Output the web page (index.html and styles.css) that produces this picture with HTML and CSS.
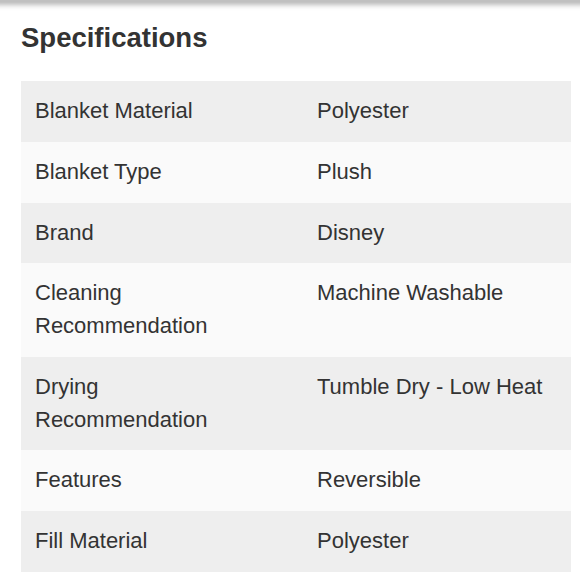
FILE: index.html
```html
<!DOCTYPE html>
<html>
<head>
<meta charset="utf-8">
<link rel="stylesheet" href="styles.css">
</head>
<body>
<div class="topbar"></div>
<section class="specs">
  <h2 class="title">Specifications</h2>
  <div class="table">
    <div class="row"><div class="cell">Blanket Material</div><div class="cell">Polyester</div></div>
    <div class="row"><div class="cell">Blanket Type</div><div class="cell">Plush</div></div>
    <div class="row"><div class="cell">Brand</div><div class="cell">Disney</div></div>
    <div class="row"><div class="cell">Cleaning Recommendation</div><div class="cell">Machine Washable</div></div>
    <div class="row"><div class="cell">Drying Recommendation</div><div class="cell">Tumble Dry - Low Heat</div></div>
    <div class="row"><div class="cell">Features</div><div class="cell">Reversible</div></div>
    <div class="row"><div class="cell">Fill Material</div><div class="cell">Polyester</div></div>
  </div>
</section>
</body>
</html>
```
FILE: styles.css
```css
html, body {
  margin: 0;
  padding: 0;
  background: #fff;
}
body {
  font-family: "Liberation Sans", Arial, sans-serif;
  color: #333;
  overflow: hidden;
}
.topbar {
  height: 0;
  margin: 0 -10px;
  box-shadow: 0 1px 6px 2px rgba(0, 0, 0, 0.55);
}
.specs {
  padding: 0 9px 0 21px;
}
.title {
  margin: 0 0 21px 0;
  padding-top: 21px;
  height: 60px;
  box-sizing: border-box;
  font-size: 27.5px;
  line-height: 34px;
  font-weight: bold;
  color: #333;
}
.table {
  display: flex;
  flex-direction: column;
}
.row {
  display: grid;
  grid-template-columns: 282px 1fr;
  background: #eeeeee;
}
.row:nth-child(even) {
  background: #fafafa;
}
.cell {
  padding: 14px;
  font-size: 22px;
  line-height: 32.75px;
}
.cell:first-child {
  padding-right: 40px;
}
```
